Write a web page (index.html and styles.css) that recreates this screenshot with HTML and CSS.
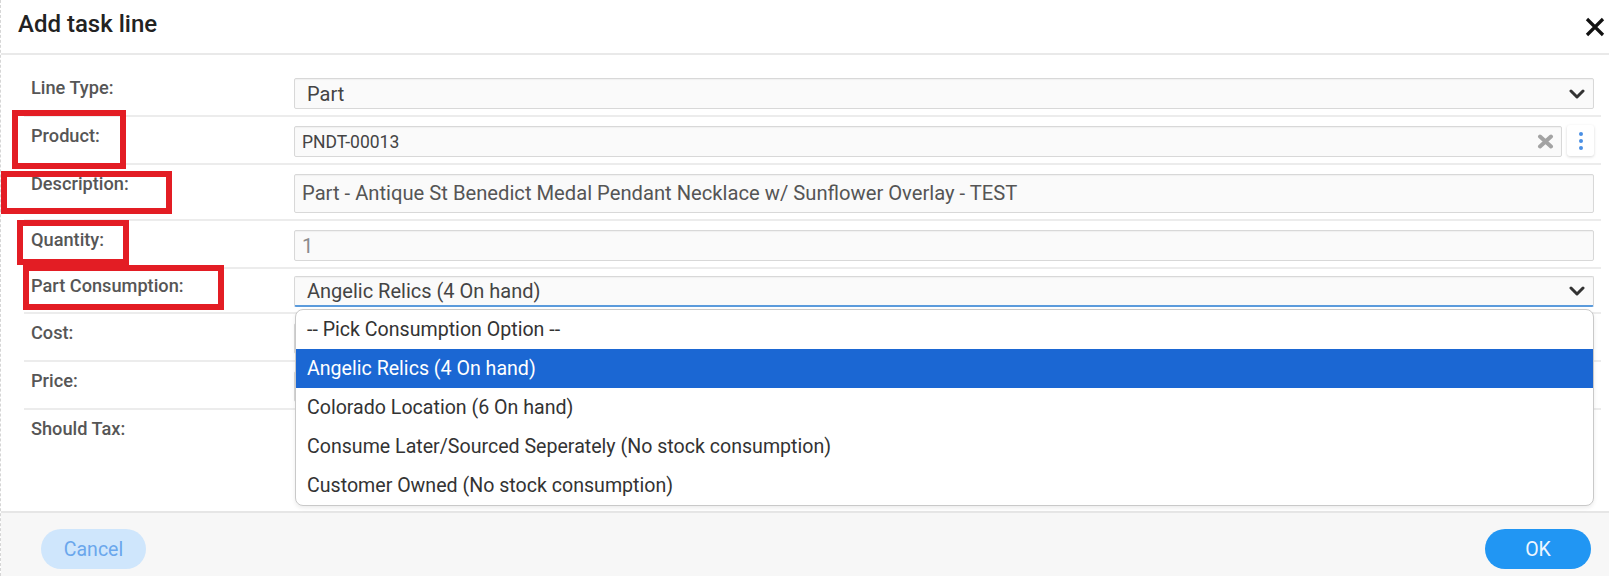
FILE: index.html
```html
<!DOCTYPE html>
<html lang="en">
<head>
<meta charset="utf-8">
<title>Add task line</title>
<link rel="stylesheet" href="styles.css">
</head>
<body>
<div class="dialog">
  <header class="dlg-head">
    <h1 class="dlg-title">Add task line</h1>
    <button class="dlg-close" aria-label="Close">
      <svg width="22" height="22" viewBox="0 0 22 22"><path d="M3 3 L19 19 M19 3 L3 19" stroke="#111" stroke-width="3.2" fill="none"/></svg>
    </button>
  </header>

  <div class="dlg-body">
    <div class="form-row">
      <div class="form-label">Line Type:</div>
      <div class="field field-select">
        <span class="field-text">Part</span>
        <svg class="chev" width="16" height="10" viewBox="0 0 16 10"><polyline points="2,2 8,8 14,2" stroke="#333" stroke-width="3" fill="none" stroke-linejoin="round" stroke-linecap="round"/></svg>
      </div>
    </div>

    <div class="form-row">
      <div class="form-label">Product:</div>
      <div class="field-group">
        <div class="field field-lookup">
          <span class="field-text small">PNDT-00013</span>
          <svg class="clear" width="17" height="15" viewBox="0 0 17 15"><path d="M3 2.5 L14 12.5 M14 2.5 L3 12.5" stroke="#a3a3a3" stroke-width="4" stroke-linecap="round" fill="none"/></svg>
        </div>
        <button class="dots-btn" aria-label="More">
          <span class="dot"></span><span class="dot"></span><span class="dot"></span>
        </button>
      </div>
    </div>

    <div class="form-row">
      <div class="form-label">Description:</div>
      <div class="field field-tall"><span class="field-text desc">Part - Antique St Benedict Medal Pendant Necklace w/ Sunflower Overlay - TEST</span></div>
    </div>

    <div class="form-row">
      <div class="form-label">Quantity:</div>
      <div class="field"><span class="field-text muted">1</span></div>
    </div>

    <div class="form-row row-consume">
      <div class="form-label">Part Consumption:</div>
      <div class="select-wrap">
        <div class="field field-select focused">
          <span class="field-text">Angelic Relics (4 On hand)</span>
          <svg class="chev" width="16" height="10" viewBox="0 0 16 10"><polyline points="2,2 8,8 14,2" stroke="#333" stroke-width="3" fill="none" stroke-linejoin="round" stroke-linecap="round"/></svg>
        </div>
        <ul class="dropdown">
          <li class="opt">-- Pick Consumption Option --</li>
          <li class="opt opt-active">Angelic Relics (4 On hand)</li>
          <li class="opt">Colorado Location (6 On hand)</li>
          <li class="opt">Consume Later/Sourced Seperately (No stock consumption)</li>
          <li class="opt">Customer Owned (No stock consumption)</li>
        </ul>
      </div>
    </div>

    <div class="form-row">
      <div class="form-label">Cost:</div>
      <div class="field"></div>
    </div>

    <div class="form-row">
      <div class="form-label">Price:</div>
      <div class="field"></div>
    </div>

    <div class="form-row row-last">
      <div class="form-label">Should Tax:</div>
      <div class="check-cell"></div>
    </div>
  </div>

  <footer class="dlg-foot">
    <button class="btn btn-cancel">Cancel</button>
    <button class="btn btn-ok">OK</button>
  </footer>

  <div class="mark mark-product"></div>
  <div class="mark mark-desc"></div>
  <div class="mark mark-qty"></div>
  <div class="mark mark-consume"></div>
</div>
</body>
</html>
```

FILE: styles.css
```css
* { box-sizing: border-box; }

html, body {
  margin: 0;
  padding: 0;
  background: #ffffff;
}

body {
  font-family: Roboto, "Noto Sans", "Liberation Sans", sans-serif;
  color: #333;
}

.dialog {
  position: relative;
  width: 1609px;
  height: 576px;
  display: flex;
  flex-direction: column;
  background: #fff;
  overflow: hidden;
  border-left: 1px dashed #d6d6d6;
}

/* header */
.dlg-head {
  height: 55px;
  flex: 0 0 55px;
  display: flex;
  justify-content: space-between;
  align-items: flex-start;
  border-bottom: 2px solid #e9e9e9;
  padding: 0 3px 0 17px;
}

.dlg-title {
  margin: 0;
  padding-top: 10px;
  font-size: 24px;
  line-height: 28px;
  font-weight: 500;
  color: #222;
}

.dlg-close {
  margin-top: 16px;
  padding: 0;
  border: 0;
  background: none;
  width: 22px;
  height: 22px;
  display: flex;
}

/* body */
.dlg-body {
  flex: 1;
  padding: 14px 8px 0 23px;
  display: flex;
  flex-direction: column;
}

.form-row {
  display: grid;
  grid-template-columns: 263px 1fr;
  padding: 9px 7px 6px 7px;
  border-bottom: 2px solid #ececec;
}

.row-consume {
  padding-top: 7px;
  padding-bottom: 5px;
}

.row-last {
  border-bottom: 0;
  flex: 1;
}

.form-label {
  font-size: 18.2px;
  line-height: 22px;
  font-weight: 500;
  color: #565656;
  margin-top: -1px;
}

.field {
  height: 31px;
  display: flex;
  align-items: center;
  background: #fafafa;
  border: 1px solid #d8d8d8;
  border-radius: 2px;
  box-shadow: inset 0 1px 1px rgba(0, 0, 0, 0.04);
  padding: 0 7px;
  min-width: 0;
}

.field-tall {
  height: 39px;
  padding-bottom: 2px;
}

.field-select {
  padding: 0 8px 0 12px;
  justify-content: space-between;
}

.field-text {
  font-size: 20px;
  line-height: 24px;
  color: #444;
  white-space: nowrap;
}

.field-text.small {
  font-size: 17.5px;
  color: #444;
}

.field-text.desc {
  font-size: 20.2px;
  color: #555;
}

.field-text.muted {
  color: #8a8a8a;
}

.chev {
  flex: 0 0 auto;
}

/* product lookup */
.field-group {
  display: flex;
  gap: 5px;
  align-items: stretch;
}

.field-lookup {
  flex: 1;
  justify-content: space-between;
  padding-right: 7px;
}

.clear {
  flex: 0 0 auto;
}

.dots-btn {
  width: 27px;
  height: 31px;
  border: 0;
  border-radius: 3px;
  background: #fff;
  box-shadow: 0 1px 3px rgba(0, 0, 0, 0.16);
  display: flex;
  flex-direction: column;
  align-items: center;
  justify-content: center;
  gap: 3px;
  padding: 0;
  margin-top: -1px;
}

.dot {
  width: 4px;
  height: 4px;
  border-radius: 50%;
  background: #4a8fe4;
}

/* consumption select + open list */
.select-wrap {
  position: relative;
}

.field-select.focused {
  border-bottom: 2px solid #5b9bdc;
}

.dropdown {
  position: absolute;
  z-index: 10;
  top: calc(100% + 2px);
  left: 1px;
  right: 0;
  margin: 0;
  padding: 0;
  list-style: none;
  background: #fff;
  border: 1px solid #c9c9c9;
  border-radius: 8px;
  box-shadow: 0 2px 4px rgba(0, 0, 0, 0.08);
  overflow: hidden;
}

.opt {
  height: 39px;
  display: flex;
  align-items: center;
  padding: 0 11px;
  font-size: 19.6px;
  color: #333;
  white-space: nowrap;
}

.opt-active {
  background: #1b67d3;
  color: #fff;
}

.check-cell {
  height: 31px;
}

/* footer */
.dlg-foot {
  flex: 0 0 65px;
  height: 65px;
  background: #f7f7f7;
  border-top: 2px solid #e6e6e6;
  display: flex;
  justify-content: space-between;
  align-items: flex-start;
  padding: 16px 18px 0 40px;
}

.btn {
  height: 40px;
  border: 0;
  border-radius: 20px;
  font-family: Roboto, "Noto Sans", "Liberation Sans", sans-serif;
  font-size: 19.5px;
  padding: 0;
}

.btn-cancel {
  width: 105px;
  background: #cfe6fc;
  color: #6aa7ec;
}

.btn-ok {
  width: 106px;
  background: #2196f3;
  color: #eef6ff;
}

/* red annotation boxes drawn over the dialog */
.mark {
  position: absolute;
  border: 6px solid #e31d24;
  pointer-events: none;
  z-index: 20;
}

.mark-product { left: 11px; top: 110px; width: 114px; height: 59px; }
.mark-desc    { left: 0;    top: 171px; width: 171px; height: 43px; }
.mark-qty     { left: 16px; top: 220px; width: 112px; height: 45px; }
.mark-consume { left: 22px; top: 265px; width: 201px; height: 45px; }
```
